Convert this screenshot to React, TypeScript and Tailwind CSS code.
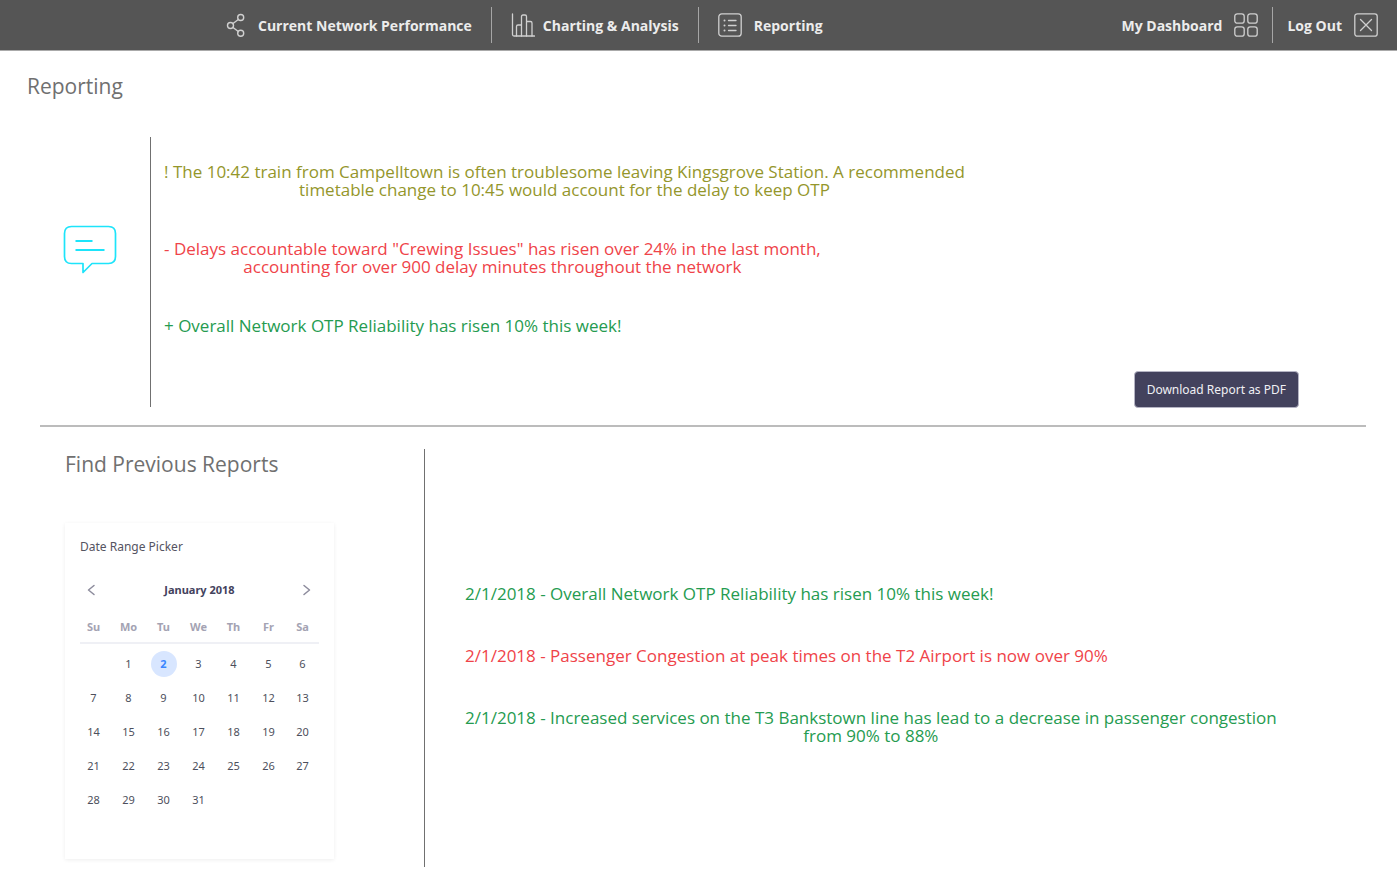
import type { ReactNode } from "react";

const strokeProps = {
  fill: "none",
  stroke: "currentColor",
  strokeLinecap: "round",
  strokeLinejoin: "round",
} as const;

function ShareIcon() {
  return (
    <svg className="size-6 shrink-0 text-[#d0d0d0]" viewBox="0 0 24 24" strokeWidth="1.4" {...strokeProps}>
      <circle cx="4.500" cy="12.500" r="3" />
      <circle cx="14.700" cy="4.500" r="3" />
      <circle cx="14.700" cy="20.300" r="3" />
      <path d="M7 10.500 12.300 6.500M7 14.500l5.300 4" />
    </svg>
  );
}

function ChartIcon() {
  return (
    <svg className="size-6 shrink-0 text-[#d0d0d0]" viewBox="0 0 24 24" strokeWidth="1.3" {...strokeProps}>
      <path d="M1.500 1v20.500a1.500 1.500 0 0 0 1.500 1.500H23.500" />
      <path d="M5.500 23V13.500q0-1.500 1.500-1.500H10.500M10.500 23V3.500q0-1.500 1.500-1.500h2q1.500 0 1.500 1.500V23M15.500 8.500h4q1.500 0 1.500 1.500V23" />
    </svg>
  );
}

function ListIcon() {
  return (
    <svg className="size-6 shrink-0 text-[#d0d0d0]" viewBox="0 0 24 24" strokeWidth="1.3" {...strokeProps}>
      <rect x="0.800" y="0.800" width="22.400" height="22.400" rx="3" />
      <path d="M10.500 7.500h7.500M10.500 12.500h7.500M10.500 17.500h7.500" />
      <path strokeWidth="2" d="M6.500 7.500h.01M6.500 12.500h.01M6.500 17.500h.01" />
    </svg>
  );
}

function GridIcon() {
  return (
    <svg className="size-6 shrink-0 text-[#d0d0d0]" viewBox="0 0 24 24" strokeWidth="1.3" {...strokeProps}>
      <rect x="0.800" y="0.800" width="9.400" height="9.400" rx="2.500" />
      <rect x="13.800" y="0.800" width="9.400" height="9.400" rx="2.500" />
      <rect x="0.800" y="13.800" width="9.400" height="9.400" rx="2.500" />
      <rect x="13.800" y="13.800" width="9.400" height="9.400" rx="2.500" />
    </svg>
  );
}

function CloseIcon() {
  return (
    <svg className="size-6 shrink-0 text-[#d0d0d0]" viewBox="0 0 24 24" strokeWidth="1.3" {...strokeProps}>
      <rect x="0.800" y="0.800" width="22.400" height="22.400" rx="2.500" />
      <path d="M6.500 6.500l11 11M17.500 6.500l-11 11" />
    </svg>
  );
}

function SpeechIcon() {
  return (
    <svg className="w-[54px] shrink-0" viewBox="0 0 54 49" strokeWidth="1.7" {...strokeProps}>
      <path d="M8.500 1.500h37q7 0 7 7v23q0 7-7 7H29L20 47.500V38.500H8.500q-7 0-7-7v-23q0-7 7-7z" />
      <path strokeLinecap="butt" strokeWidth="2" d="M12.500 16h17M12.500 25h29" />
    </svg>
  );
}

function NavLink({ children }: { children: ReactNode }) {
  return (
    <a href="#" className="flex items-center gap-2 whitespace-nowrap">
      {children}
    </a>
  );
}

function Divider() {
  return <span className="h-9 w-px bg-[#a6a6a6]" />;
}

const weekdays = ["Su", "Mo", "Tu", "We", "Th", "Fr", "Sa"];
const weeks: (number | null)[][] = [
  [null, 1, 2, 3, 4, 5, 6],
  [7, 8, 9, 10, 11, 12, 13],
  [14, 15, 16, 17, 18, 19, 20],
  [21, 22, 23, 24, 25, 26, 27],
  [28, 29, 30, 31, null, null, null],
];

function DatePicker() {
  return (
    <section className="mt-11 w-[269px] px-[15px] pt-4 pb-[42px] font-['Noto_Sans',sans-serif] shadow-[0_1px_4px_rgba(0,0,0,0.07)]">
      <h3 className="text-[12px] leading-4 text-[#555462]">Date Range Picker</h3>
      <div className="mt-[25px] flex items-center justify-between px-[6px] text-[#8c8b9c]">
        <button type="button" aria-label="Previous month">
          <svg className="h-5 w-3" viewBox="0 0 12 20" strokeWidth="1.5" {...strokeProps}>
            <path d="M8 5.500 2.500 10 8 14.500" />
          </svg>
        </button>
        <span className="text-[11px] font-bold text-[#43425d]">January 2018</span>
        <button type="button" aria-label="Next month">
          <svg className="h-5 w-3" viewBox="0 0 12 20" strokeWidth="1.5" {...strokeProps}>
            <path d="M3 5.500 8.500 10 3 14.500" />
          </svg>
        </button>
      </div>
      <table className="mt-3 w-full table-fixed border-collapse text-center text-[11px]">
        <thead className="border-b-2 border-[#eff0f5] text-[#a4a3b3]">
          <tr>
            {weekdays.map((day) => (
              <th key={day} className="h-[31px] w-[35px] p-0 font-bold first:w-[31px] first:pr-1 last:w-[33px]">
                {day}
              </th>
            ))}
          </tr>
        </thead>
        <tbody className="text-[#4d4f5c]">
          <tr className="h-1" aria-hidden="true" />
          {weeks.map((week, i) => (
            <tr key={i}>
              {week.map((day, j) => (
                <td key={j} className="h-[34px] p-0 first:pr-1">
                  {day !== null && (
                    <button
                      type="button"
                      className={
                        day === 2
                          ? "size-[26px] rounded-full bg-[#d8e6ff] font-bold text-[#3b86ff]"
                          : "size-[26px] rounded-full"
                      }
                    >
                      {day}
                    </button>
                  )}
                </td>
              ))}
            </tr>
          ))}
        </tbody>
      </table>
    </section>
  );
}

export default function App() {
  return (
    <div className="min-h-screen bg-white font-['Open_Sans','Noto_Sans',sans-serif]">
      <header className="flex h-[51px] items-center justify-between border-b border-[#aaa] bg-[#555] pr-[19px] pl-[226px] text-[14px] font-bold text-[#ececec]">
        <nav className="flex items-center gap-[19px]">
          <NavLink><ShareIcon />Current Network Performance</NavLink>
          <Divider />
          <NavLink><ChartIcon />Charting &amp; Analysis</NavLink>
          <Divider />
          <NavLink><ListIcon /><span className="ml-1">Reporting</span></NavLink>
        </nav>
        <div className="flex items-center gap-3.5">
          <NavLink>My Dashboard<span className="ml-1"><GridIcon /></span></NavLink>
          <Divider />
          <NavLink>Log Out<span className="ml-1"><CloseIcon /></span></NavLink>
        </div>
      </header>

      <main className="pb-3">
        <h1 className="pt-5 pl-[27px] text-[21px] leading-[30px] text-[#707070]">Reporting</h1>
        <section className="mt-9 mr-[31px] ml-10 flex border-b-2 border-[#bcbcbc] pb-[18px]">
          <div className="flex w-[110px] items-center pb-[46px] pl-[23px] text-[#1de4fa]">
            <SpeechIcon />
          </div>
          <div className="flex h-[270px] flex-1 items-end justify-between border-l border-[#707070] pr-[67px]">
            <div className="flex flex-col items-start gap-[41px] self-start pt-[26px] pl-[13px] text-center text-[17px] leading-[18px]">
              <p className="text-[#94962b]">
                ! The 10:42 train from Campelltown is often troublesome leaving Kingsgrove Station. A recommended
                <br />
                timetable change to 10:45 would account for the delay to keep OTP
              </p>
              <p className="text-[#ef4349]">
                - Delays accountable toward "Crewing Issues" has risen over 24% in the last month,
                <br />
                accounting for over 900 delay minutes throughout the network
              </p>
              <p className="text-[#259b50]">+ Overall Network OTP Reliability has risen 10% this week!</p>
            </div>
            <button
              type="button"
              className="-mb-px h-[37px] shrink-0 rounded-[4px] border border-[#b5b4c4] bg-[#43425d] px-3 font-['Noto_Sans',sans-serif] text-[12px] whitespace-nowrap text-[#f0f0f4]"
            >
              Download Report as PDF
            </button>
          </div>
        </section>

        <div className="mt-[22px] flex pl-[65px]">
          <section className="w-[359px] shrink-0">
            <h2 className="text-[21px] leading-[30px] text-[#707070]">Find Previous Reports</h2>
            <DatePicker />
          </section>
          <section className="flex h-[418px] flex-1 flex-col items-start gap-11 border-l border-[#707070] pt-[136px] pl-10 text-center text-[17px] leading-[18px] text-[#259b50]">
            <p>2/1/2018 - Overall Network OTP Reliability has risen 10% this week!</p>
            <p className="text-[#ef4349]">
              2/1/2018 - Passenger Congestion at peak times on the T2 Airport is now over 90%
            </p>
            <p>
              2/1/2018 - Increased services on the T3 Bankstown line has lead to a decrease in passenger congestion
              <br />
              from 90% to 88%
            </p>
          </section>
        </div>
      </main>
    </div>
  );
}
